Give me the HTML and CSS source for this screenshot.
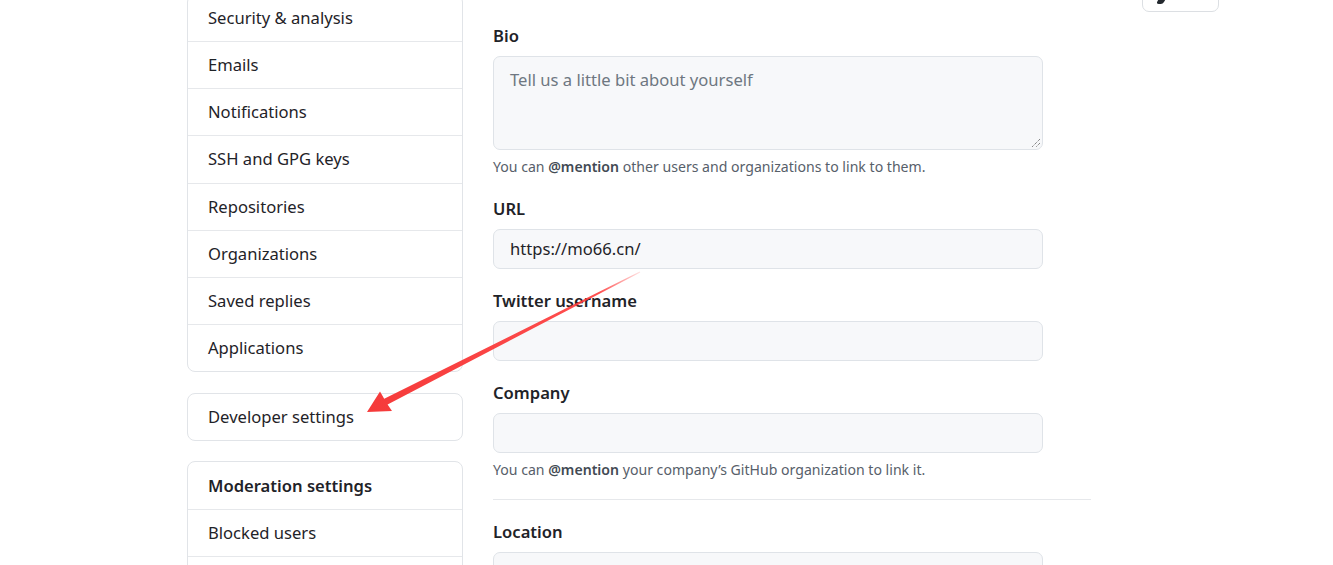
FILE: index.html
```html
<!DOCTYPE html>
<html>
<head>
<meta charset="utf-8">
<link rel="stylesheet" href="styles.css">
</head>
<body>
<div class="layout">
  <aside class="sidebar">
    <nav class="menu">
      <a class="menu-item">Security &amp; analysis</a>
      <a class="menu-item">Emails</a>
      <a class="menu-item">Notifications</a>
      <a class="menu-item">SSH and GPG keys</a>
      <a class="menu-item">Repositories</a>
      <a class="menu-item">Organizations</a>
      <a class="menu-item">Saved replies</a>
      <a class="menu-item">Applications</a>
    </nav>
    <nav class="menu">
      <a class="menu-item">Developer settings</a>
    </nav>
    <nav class="menu">
      <div class="menu-heading">Moderation settings</div>
      <a class="menu-item">Blocked users</a>
      <a class="menu-item"></a>
    </nav>
  </aside>
  <main class="main">
    <div class="group">
      <label class="label">Bio</label>
      <div class="textarea">
        <span class="placeholder">Tell us a little bit about yourself</span>
        <svg class="grip" width="10" height="10" viewBox="0 0 10 10"><path d="M9 1L1 9M9 5L5 9" stroke="#555" stroke-width="1" stroke-dasharray="1 1"/></svg>
      </div>
      <p class="note">You can <b>@mention</b> other users and organizations to link to them.</p>
    </div>
    <div class="group">
      <label class="label">URL</label>
      <div class="input">https://mo66.cn/</div>
    </div>
    <div class="group">
      <label class="label">Twitter username</label>
      <div class="input"></div>
    </div>
    <div class="group group-last">
      <label class="label">Company</label>
      <div class="input"></div>
      <p class="note">You can <b>@mention</b> your company’s GitHub organization to link it.</p>
    </div>
    <hr class="divider">
    <div class="group">
      <label class="label">Location</label>
      <div class="input"></div>
    </div>
  </main>
  <div class="aside-right">
    <div class="btn"><span class="btn-icon"></span></div>
  </div>
  <svg class="annotation" width="1333" height="565" viewBox="0 0 1333 565">
    <defs>
      <linearGradient id="fade" x1="640" y1="272" x2="368" y2="411" gradientUnits="userSpaceOnUse">
        <stop offset="0" stop-color="#ff3b3b" stop-opacity="0.15"/>
        <stop offset="0.15" stop-color="#ff3b3b" stop-opacity="0.9"/>
        <stop offset="1" stop-color="#f53a3a"/>
      </linearGradient>
    </defs>
    <polygon fill="url(#fade)" points="367,412 392,411 387.6,404.6 640.2,272.4 639.8,271.6 384.2,398.8 380,391.5"/>
  </svg>
</div>
</body>
</html>
```

FILE: styles.css
```css
html, body {
  margin: 0;
  padding: 0;
  background: #ffffff;
  overflow: hidden;
}
body {
  font-family: "Segoe UI", "Noto Sans", "Liberation Sans", sans-serif;
  color: #1f2328;
  height: 565px;
}
.layout {
  position: relative;
  display: flex;
  align-items: flex-start;
  padding-left: 187px;
}
.sidebar {
  width: 276px;
  flex: none;
  margin-top: -6px;
}
.menu {
  border: 1px solid #e1e4e8;
  border-radius: 8px;
  margin-bottom: 21px;
  overflow: hidden;
}
.menu + .menu {
  margin-top: 1px;
}
.menu + .menu + .menu {
  margin-top: -1px;
}
.menu-item, .menu-heading {
  display: block;
  height: 46.15px;
  line-height: 46px;
  padding: 0 20px;
  font-size: 16.6px;
  color: #1f2328;
  border-top: 1px solid #e6e8eb;
  box-sizing: content-box;
}
.menu-item:first-child, .menu-heading {
  border-top: none;
}
.menu-heading {
  font-weight: 600;
  height: 47px;
  line-height: 47px;
}
.main {
  width: 598px;
  flex: none;
  margin-left: 30px;
  padding-top: 24px;
}
.group {
  width: 550px;
  margin-bottom: 20px;
}
.group-last {
  margin-bottom: 19px;
}
.label {
  display: block;
  font-size: 16.6px;
  font-weight: 600;
  line-height: 24px;
  height: 24px;
  margin-bottom: 8px;
  color: #1f2328;
}
.textarea, .input {
  position: relative;
  box-sizing: border-box;
  border: 1px solid #dfe3e8;
  background: #f7f8fa;
  border-radius: 7px;
  font-size: 16.6px;
  color: #1f2328;
  padding: 0 16px;
}
.textarea {
  height: 94px;
  padding-top: 11px;
  line-height: 24px;
}
.placeholder {
  color: #6e7781;
}
.grip {
  position: absolute;
  right: 1px;
  bottom: 1px;
}
.input {
  height: 40px;
  line-height: 38px;
}
.note {
  margin: 6px 0 0;
  font-size: 14.1px;
  line-height: 21px;
  color: #57606a;
}
.note b {
  font-weight: 600;
  color: #424a53;
}
.divider {
  border: none;
  border-top: 1px solid #e6e8eb;
  margin: 0 0 20px;
  width: 598px;
}
.aside-right {
  margin-left: 51px;
  margin-top: -30px;
}
.btn {
  width: 75px;
  height: 40px;
  border: 1px solid #dcdfe3;
  border-radius: 7px;
  background: #ffffff;
  position: relative;
}
.btn-icon {
  position: absolute;
  left: 14px;
  top: 29px;
  width: 7px;
  height: 4px;
  background: #24292f;
  border-radius: 0 0 2px 3px;
  transform: skewX(-30deg);
}
.annotation {
  position: absolute;
  left: 0;
  top: 0;
  pointer-events: none;
}
```
